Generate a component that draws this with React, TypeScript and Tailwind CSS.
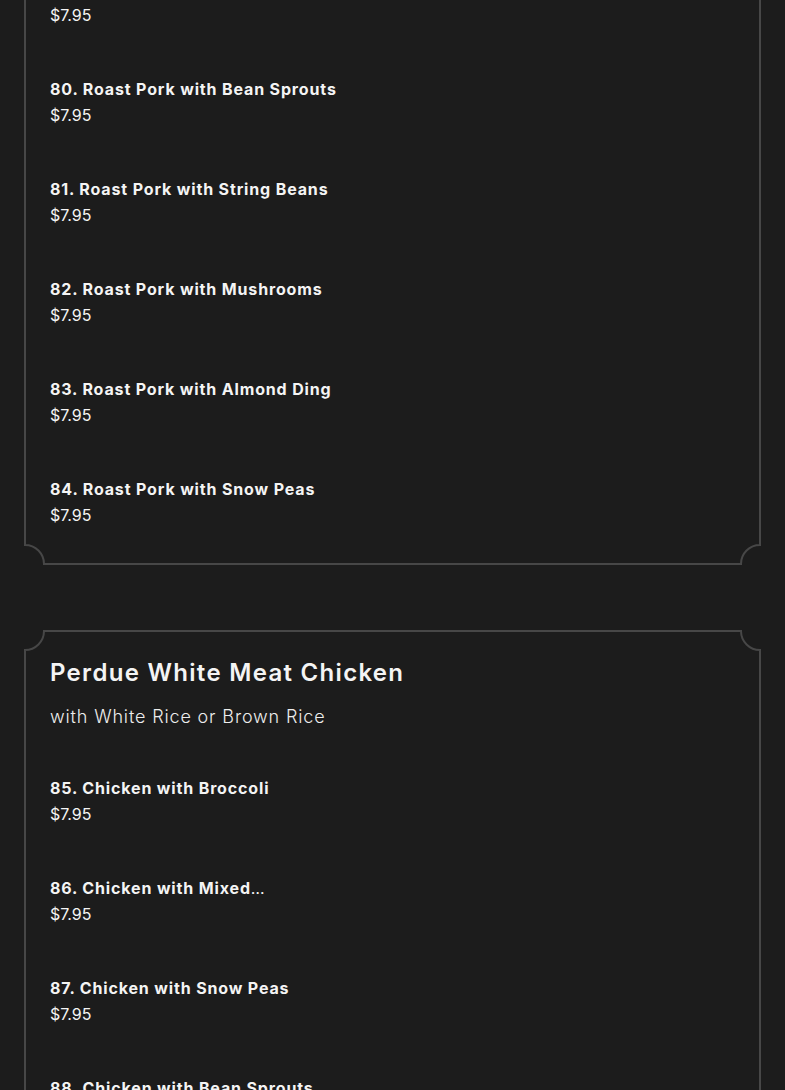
type Item = { name: string; price: string; more?: boolean }

const roastPork: Item[] = [
  { name: "79. Roast Pork with Broccoli", price: "$7.95" },
  { name: "80. Roast Pork with Bean Sprouts", price: "$7.95" },
  { name: "81. Roast Pork with String Beans", price: "$7.95" },
  { name: "82. Roast Pork with Mushrooms", price: "$7.95" },
  { name: "83. Roast Pork with Almond Ding", price: "$7.95" },
  { name: "84. Roast Pork with Snow Peas", price: "$7.95" },
]

const chicken: Item[] = [
  { name: "85. Chicken with Broccoli", price: "$7.95" },
  { name: "86. Chicken with Mixed", price: "$7.95", more: true },
  { name: "87. Chicken with Snow Peas", price: "$7.95" },
  { name: "88. Chicken with Bean Sprouts", price: "$7.95" },
]

function Corner({ pos }: { pos: "tl" | "tr" | "bl" | "br" }) {
  const place = {
    tl: "-top-[2px] -left-[2px]",
    tr: "-top-[2px] -right-[2px] -scale-x-100",
    bl: "-bottom-[2px] -left-[2px] -scale-y-100",
    br: "-bottom-[2px] -right-[2px] rotate-180",
  }[pos]
  return (
    <svg
      width="22"
      height="22"
      viewBox="0 0 22 22"
      className={`absolute ${place}`}
    >
      <rect width="22" height="22" fill="#1c1c1c" />
      <path
        d="M1 22 L1 20 A19 19 0 0 0 20 1 L22 1"
        fill="none"
        stroke="#474747"
        strokeWidth="2"
      />
    </svg>
  )
}

function MenuItem({ item }: { item: Item }) {
  return (
    <div className="flex flex-col">
      <p className="text-[16px] leading-[26px] font-bold tracking-[0.85px] text-[#f4f4f4]">
        {item.name}
        {item.more && <span className="font-normal tracking-normal">…</span>}
      </p>
      <p className="text-[16px] leading-[26px] text-[#f4f4f4]">{item.price}</p>
    </div>
  )
}

function Card({ children, className }: { children: React.ReactNode; className?: string }) {
  return (
    <div className={`relative border-2 border-[#474747] px-[24px] ${className ?? ""}`}>
      <Corner pos="tl" />
      <Corner pos="tr" />
      <Corner pos="bl" />
      <Corner pos="br" />
      {children}
    </div>
  )
}

export default function App() {
  return (
    <div
      className="min-h-screen bg-[#1c1c1c] overflow-hidden"
      style={{ fontFamily: "Inter, 'Open Sans', sans-serif" }}
    >
      <div className="mx-[24px] -mt-[51px] flex flex-col gap-[65px]">
        <Card className="pt-[25px] pb-[35px]">
          <div className="flex flex-col gap-[48px]">
            {roastPork.map((it) => (
              <MenuItem key={it.name} item={it} />
            ))}
          </div>
        </Card>

        <Card className="pt-[25px] pb-[40px]">
          <h2 className="text-[24px] leading-[32px] font-semibold tracking-[1.3px] text-[#f4f4f4]">
            Perdue White Meat Chicken
          </h2>
          <p className="mt-[14px] text-[18px] leading-[28px] font-light tracking-[0.85px] text-[#ededed]">
            with White Rice or Brown Rice
          </p>
          <div className="mt-[44px] flex flex-col gap-[48px]">
            {chicken.map((it) => (
              <MenuItem key={it.name} item={it} />
            ))}
          </div>
        </Card>
      </div>
    </div>
  )
}
